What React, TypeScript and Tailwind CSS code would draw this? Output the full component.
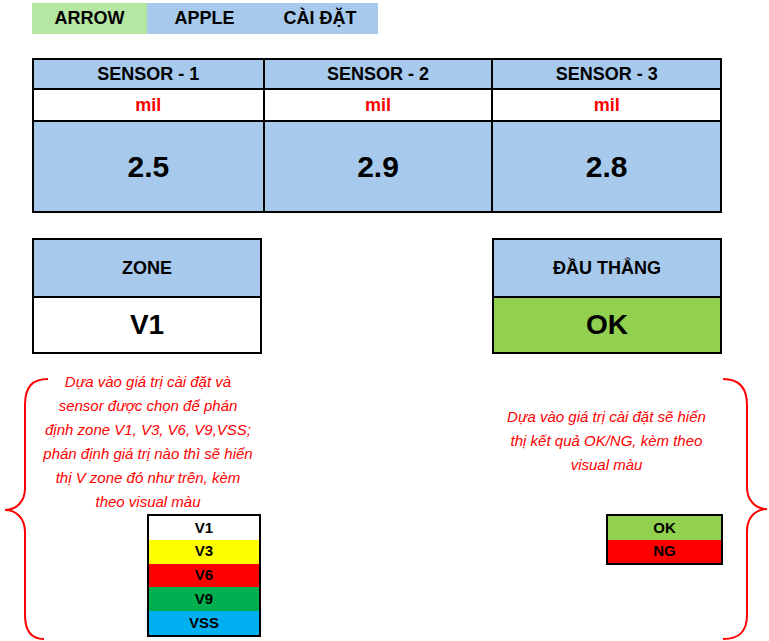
const font = { fontFamily: '"Liberation Sans", Arial, sans-serif' };

const sensors = [
  { name: 'SENSOR - 1', value: '2.5' },
  { name: 'SENSOR - 2', value: '2.9' },
  { name: 'SENSOR - 3', value: '2.8' },
];

const zones = [
  { label: 'V1', bg: 'bg-white' },
  { label: 'V3', bg: 'bg-[#ffff00]' },
  { label: 'V6', bg: 'bg-[#ff0000]' },
  { label: 'V9', bg: 'bg-[#00b050]' },
  { label: 'VSS', bg: 'bg-[#00b0f0]' },
];

function LeftBrace() {
  return (
    <svg width="48" height="270" viewBox="0 0 48 270" className="shrink-0">
      <path
        d="M48 9 C32 9 25 17 25 35 L25 118 C25 132 16 140 5 140 C16 140 25 148 25 162 L25 245 C25 262 32 269 44 269"
        fill="none"
        stroke="#ff0000"
        strokeWidth="2"
      />
    </svg>
  );
}

function RightBrace() {
  return (
    <svg width="46" height="270" viewBox="0 0 46 270" className="shrink-0">
      <path
        d="M0 9 C16 9 24 17 24 35 L24 117 C24 131 33 139 44 139 C33 139 24 147 24 161 L24 245 C24 262 16 269 0 269"
        fill="none"
        stroke="#ff0000"
        strokeWidth="2"
      />
    </svg>
  );
}

export default function App() {
  return (
    <div className="w-[769px] h-[641px] bg-white overflow-hidden text-black" style={font}>
      {/* Top tabs */}
      <div className="ml-[32px] mt-[3px] flex h-[31px] w-[346px] text-[18px] font-bold">
        <div className="w-[115px] bg-[#b5e6a2] flex items-center justify-center">ARROW</div>
        <div className="w-[115px] bg-[#a6c9ec] flex items-center justify-center">APPLE</div>
        <div className="w-[116px] bg-[#a6c9ec] flex items-center justify-center">CÀI ĐẶT</div>
      </div>

      {/* Sensor table */}
      <div className="ml-[32px] mt-[24px] w-[690px] border-2 border-black">
        <div className="grid grid-cols-3 h-[28px] bg-[#a6c9ec]">
          {sensors.map((s, i) => (
            <div
              key={s.name}
              className={`flex items-center justify-center text-[18px] font-bold ${i > 0 ? 'border-l-2 border-black' : ''}`}
            >
              {s.name}
            </div>
          ))}
        </div>
        <div className="grid grid-cols-3 h-[32px] border-t-2 border-black bg-white">
          {sensors.map((s, i) => (
            <div
              key={s.name}
              className={`flex items-center justify-center text-[18px] font-bold text-[#ff0000] ${i > 0 ? 'border-l-2 border-black' : ''}`}
            >
              mil
            </div>
          ))}
        </div>
        <div className="grid grid-cols-3 h-[91px] border-t-2 border-black bg-[#a6c9ec]">
          {sensors.map((s, i) => (
            <div
              key={s.name}
              className={`flex items-center justify-center text-[30px] font-bold ${i > 0 ? 'border-l-2 border-black' : ''}`}
            >
              {s.value}
            </div>
          ))}
        </div>
      </div>

      {/* Zone / result */}
      <div className="ml-[32px] mt-[25px] w-[690px] flex justify-between">
        <div className="w-[230px] border-2 border-black">
          <div className="h-[56px] bg-[#a6c9ec] flex items-center justify-center text-[18px] font-bold">ZONE</div>
          <div className="h-[56px] border-t-2 border-black bg-white flex items-center justify-center text-[28px] font-bold">
            V1
          </div>
        </div>
        <div className="w-[230px] border-2 border-black">
          <div className="h-[56px] bg-[#a6c9ec] flex items-center justify-center text-[18px] font-bold">ĐẦU THẲNG</div>
          <div className="h-[56px] border-t-2 border-black bg-[#92d050] flex items-center justify-center text-[28px] font-bold">
            OK
          </div>
        </div>
      </div>

      {/* Notes */}
      <div className="mt-[16px] flex h-[270px]">
        <LeftBrace />
        <div className="-ml-[20px] w-[240px] shrink-0">
          <div className="text-center italic text-[15px] leading-[24px] text-[#ff0000]">
            <div>Dựa vào giá trị cài đặt và</div>
            <div>sensor được chọn để phán</div>
            <div>định zone V1, V3, V6, V9,VSS;</div>
            <div>phán định giá trị nào thì sẽ hiển</div>
            <div>thị V zone đó như trên, kèm</div>
            <div>theo visual màu</div>
          </div>
          <div className="ml-[119px] w-[114px] border-2 border-black text-[15px] font-bold">
            {zones.map((z) => (
              <div key={z.label} className={`h-[23.8px] flex items-center justify-center ${z.bg}`}>
                {z.label}
              </div>
            ))}
          </div>
        </div>
        <div className="ml-[222px] w-[233px] shrink-0">
          <div className="mt-[35px] text-center italic text-[15px] leading-[24px] text-[#ff0000]">
            <div>Dựa vào giá trị cài đặt sẽ hiển</div>
            <div>thị kết quả OK/NG, kèm theo</div>
            <div>visual màu</div>
          </div>
          <div className="ml-[116px] mt-[37px] w-[117px] border-2 border-black text-[15px] font-bold">
            <div className="h-[24px] bg-[#92d050] flex items-center justify-center">OK</div>
            <div className="h-[23px] bg-[#ff0000] flex items-center justify-center">NG</div>
          </div>
        </div>
        <RightBrace />
      </div>
    </div>
  );
}
